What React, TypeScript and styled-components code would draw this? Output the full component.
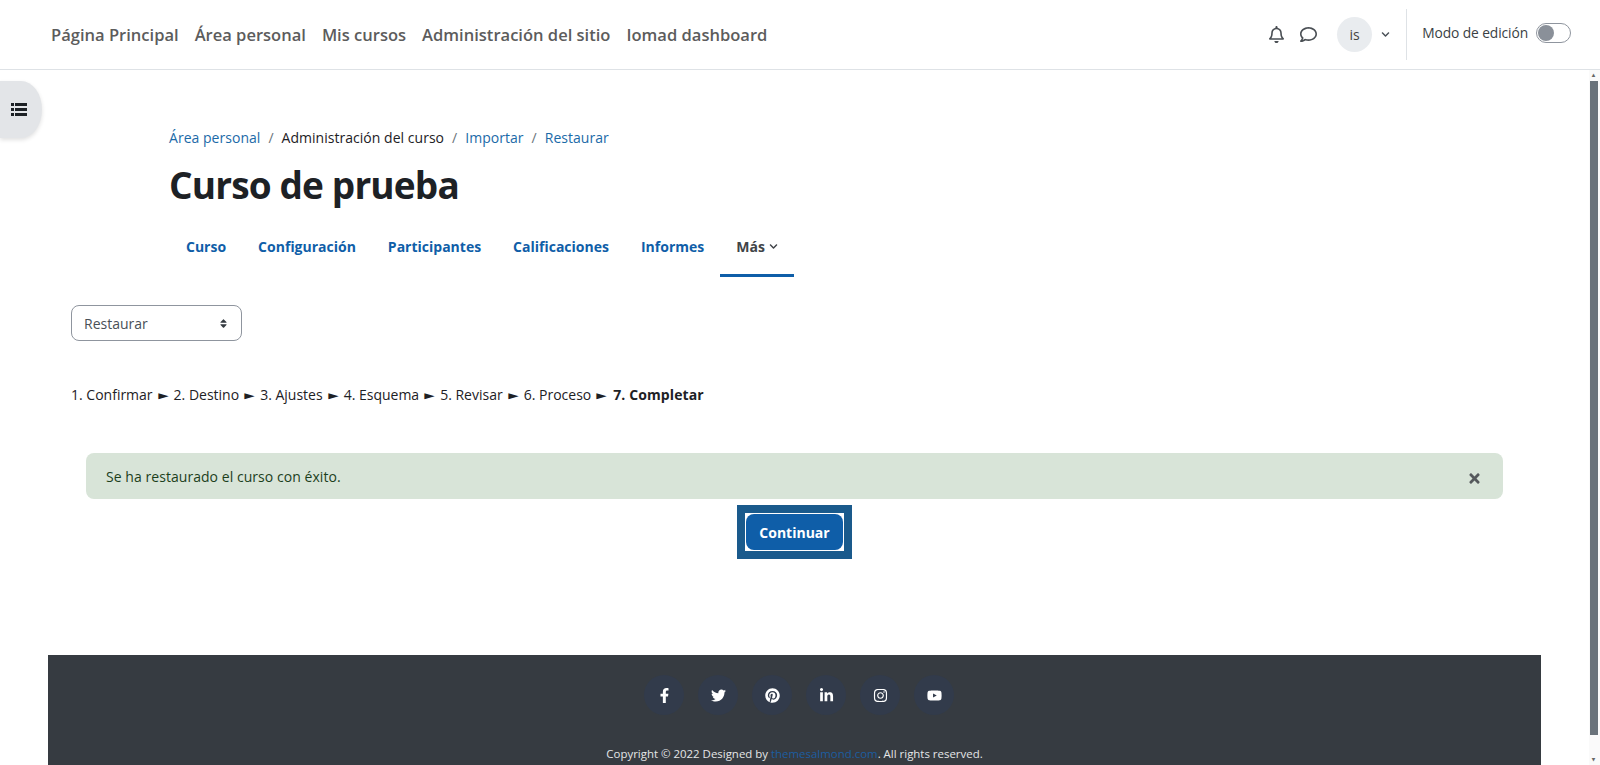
import React from 'react';
import styled, { createGlobalStyle } from 'styled-components';
import {
  FaFacebookF, FaTwitter, FaPinterest, FaLinkedinIn, FaInstagram, FaYoutube,
  FaRegBell, FaRegComment, FaTimes, FaChevronDown, FaSort,
} from 'react-icons/fa';

const Global = createGlobalStyle`
  html, body { margin: 0; padding: 0; height: 765px; overflow: hidden; background: #fff; }
  body { font-family: "Open Sans", "Noto Sans", sans-serif; color: #1d2125; font-size: 14px; }
  * { box-sizing: border-box; }
  a { text-decoration: none; color: inherit; }
`;

const Page = styled.div`
  height: 765px;
  overflow: hidden;
  position: relative;
`;

const Header = styled.header`
  height: 70px;
  border-bottom: 1px solid #dee2e6;
  display: flex;
  align-items: center;
  padding: 0 29px 0 51px;
`;

const MainNav = styled.nav`
  display: flex;
  gap: 16px;
  flex: 1;
`;

const NavLink = styled.a`
  font-size: 16.55px;
  font-weight: 600;
  color: #5c5c5c;
`;

const HeaderActions = styled.div`
  display: flex;
  align-items: center;
  height: 51px;
  margin-top: -1px;
`;

const HeaderIcon = styled.span`
  display: flex;
  color: #4a4f54;
  font-size: 17px;
  margin-right: 15px;
`;

const Avatar = styled.span`
  width: 35px;
  height: 35px;
  margin-left: 5px;
  border-radius: 50%;
  background: #e9ecef;
  color: #444;
  font-size: 14px;
  display: flex;
  align-items: center;
  justify-content: center;
`;

const Caret = styled.span`
  display: flex;
  color: #495057;
  font-size: 9px;
  margin-left: 9px;
`;

const Divider = styled.div`
  width: 1px;
  height: 51px;
  background: #dee2e6;
  margin: 0 15px 0 16px;
`;

const EditLabel = styled.span`
  font-size: 13.8px;
  color: #3a3f44;
  margin-right: 8px;
  margin-top: -3px;
  letter-spacing: -0.1px;
`;

const Toggle = styled.span`
  width: 35px;
  height: 20px;
  margin-top: -3px;
  border: 1px solid #8f959e;
  border-radius: 10px;
  padding: 1px;
  display: flex;
  background: #fff;
`;

const Knob = styled.span`
  width: 16px;
  height: 16px;
  border-radius: 50%;
  background: #8a9099;
`;

const DrawerToggle = styled.div`
  position: absolute;
  left: 0;
  top: 81px;
  width: 42px;
  height: 57px;
  background: #e3e5e8;
  border-radius: 0 50% 50% 0 / 0 50% 50% 0;
  box-shadow: 0 2px 4px rgba(0, 0, 0, 0.12);
  color: #1d2125;
  display: flex;
  align-items: center;
  padding-left: 11px;
`;

const Scrollbar = styled.div`
  position: absolute;
  top: 70px;
  right: 0;
  bottom: 0;
  width: 11px;
  background: #fafafa;
  display: flex;
  flex-direction: column;
  align-items: flex-start;
`;

const ScrollArrow = styled.span<{ $down?: boolean }>`
  height: 11px;
  width: 9px;
  color: #666;
  font-size: 6px;
  line-height: 11px;
  text-align: center;
  transform: ${p => (p.$down ? 'scaleY(-1)' : 'none')};
`;

const ScrollThumb = styled.div`
  flex: 1;
  width: 8px;
  margin: 0 0 19px 1px;
  background: #6a737b;
`;

const Hero = styled.section`
  padding: 58px 0 0 169px;
`;

const Crumbs = styled.div`
  display: flex;
  gap: 8px;
  font-size: 14px;
  line-height: 20px;
  letter-spacing: 0.03px;
  color: #6a737b;
`;

const Crumb = styled.a<{ $plain?: boolean }>`
  color: ${p => (p.$plain ? '#1d2125' : '#1b6aa8')};
`;

const Title = styled.h1`
  margin: 13px 0 0;
  font-size: 37px;
  line-height: 48px;
  font-weight: 700;
  color: #1d2125;
  letter-spacing: -0.85px;
`;

const Tabs = styled.div`
  display: flex;
  margin: 15px 0 0 1px;
`;

const Tab = styled.a<{ $active?: boolean }>`
  display: flex;
  align-items: center;
  gap: 4px;
  height: 53px;
  padding: 0 16px 6px;
  font-size: 14px;
  font-weight: 700;
  color: ${p => (p.$active ? '#404448' : '#0f5ea8')};
  border-bottom: 3px solid ${p => (p.$active ? '#0f5ea8' : 'transparent')};
`;

const TabCaret = styled.span`
  display: flex;
  font-size: 9px;
  margin-top: 1px;
`;

const Body = styled.section`
  padding: 28px 0 0 71px;
`;

const Select = styled.div`
  width: 171px;
  height: 36px;
  border: 1px solid #8f959e;
  border-radius: 8px;
  display: flex;
  align-items: center;
  justify-content: space-between;
  padding: 0 12px;
  font-size: 14px;
  color: #495057;
`;

const SortIcon = styled.span`
  display: flex;
  font-size: 11px;
  color: #343a40;
`;

const Steps = styled.div`
  margin-top: 44px;
  font-size: 14px;
  line-height: 20px;
  color: #1d2125;
`;

const Arrow = styled.span`
  display: inline-block;
  width: 11px;
  margin: 0 5px;
  font-size: 9px;
  line-height: 8px;
  text-align: center;
  vertical-align: 1px;
  transform: scale(1.9, 1.1);
`;

const CurrentStep = styled.strong`
  margin-left: 1px;
  letter-spacing: 0.1px;
`;

const AlertBox = styled.div`
  margin: 48px 0 0 15px;
  width: 1417px;
  height: 46px;
  background: #d8e4d8;
  border-radius: 8px;
  display: flex;
  align-items: center;
  justify-content: space-between;
  padding: 0 21px 0 20px;
  color: #1c3f1c;
  font-size: 14px;
  letter-spacing: 0.05px;
`;

const CloseIcon = styled.span`
  display: flex;
  font-size: 15px;
  color: #55595c;
  margin-top: 5px;
`;

const ButtonRow = styled.div`
  display: flex;
  justify-content: center;
  margin: 6px 0 0 -71px;
  padding-right: 11px;
`;

const ButtonFrame = styled.div`
  width: 115px;
  height: 54px;
  background: #1a5a8c;
  display: flex;
  align-items: center;
  justify-content: center;
`;

const ButtonRing = styled.div`
  background: #fff;
  width: 99px;
  height: 38px;
  padding: 1px;
`;

const Button = styled.button`
  width: 100%;
  height: 100%;
  border: 0;
  padding: 0;
  border-radius: 8px;
  background: #0f5ea8;
  color: #fff;
  font-family: inherit;
  font-size: 14px;
  font-weight: 700;
`;

const Footer = styled.footer`
  margin: 96px 0 0 48px;
  width: 1493px;
  height: 200px;
  background: #363b41;
  padding-top: 20px;
  display: flex;
  flex-direction: column;
  align-items: center;
`;

const Socials = styled.div`
  display: flex;
  gap: 14px;
  margin-left: 9px;
`;

const Social = styled.a`
  width: 40px;
  height: 40px;
  border-radius: 50%;
  background: #323b4b;
  color: #fff;
  font-size: 15px;
  display: flex;
  align-items: center;
  justify-content: center;
`;

const Copyright = styled.p`
  margin: 30px 0 0;
  font-size: 11.45px;
  line-height: 18px;
  color: #e4e6e8;
`;

const FooterLink = styled.a`
  color: #1c5da0;
`;

const navItems = ['Página Principal', 'Área personal', 'Mis cursos', 'Administración del sitio', 'Iomad dashboard'];
const tabs = ['Curso', 'Configuración', 'Participantes', 'Calificaciones', 'Informes'];
const steps = ['1. Confirmar', '2. Destino', '3. Ajustes', '4. Esquema', '5. Revisar', '6. Proceso'];
const socials = [FaFacebookF, FaTwitter, FaPinterest, FaLinkedinIn, FaInstagram, FaYoutube];

const ListIcon = () => (
  <svg width="16" height="13" viewBox="0 0 16 13" fill="currentColor">
    <rect x="0" y="0" width="3" height="3" />
    <rect x="4" y="0" width="12" height="3" />
    <rect x="0" y="5" width="3" height="3" />
    <rect x="4" y="5" width="12" height="3" />
    <rect x="0" y="10" width="3" height="3" />
    <rect x="4" y="10" width="12" height="3" />
  </svg>
);

export default function App() {
  return (
    <Page>
      <Global />
      <Header>
        <MainNav>
          {navItems.map(n => <NavLink key={n} href="#">{n}</NavLink>)}
        </MainNav>
        <HeaderActions>
          <HeaderIcon><FaRegBell /></HeaderIcon>
          <HeaderIcon><FaRegComment /></HeaderIcon>
          <Avatar>is</Avatar>
          <Caret><FaChevronDown /></Caret>
          <Divider />
          <EditLabel>Modo de edición</EditLabel>
          <Toggle><Knob /></Toggle>
        </HeaderActions>
      </Header>
      <DrawerToggle><ListIcon /></DrawerToggle>
      <Scrollbar>
        <ScrollArrow>▲</ScrollArrow>
        <ScrollThumb />
        <ScrollArrow $down>▲</ScrollArrow>
      </Scrollbar>
      <Hero>
        <Crumbs>
          <Crumb href="#">Área personal</Crumb><span>/</span>
          <Crumb $plain>Administración del curso</Crumb><span>/</span>
          <Crumb href="#">Importar</Crumb><span>/</span>
          <Crumb href="#">Restaurar</Crumb>
        </Crumbs>
        <Title>Curso de prueba</Title>
        <Tabs>
          {tabs.map(t => <Tab key={t} href="#">{t}</Tab>)}
          <Tab $active href="#">Más <TabCaret><FaChevronDown /></TabCaret></Tab>
        </Tabs>
      </Hero>
      <Body>
        <Select>Restaurar<SortIcon><FaSort /></SortIcon></Select>
        <Steps>
          {steps.map(s => <React.Fragment key={s}>{s}<Arrow>►</Arrow></React.Fragment>)}
          <CurrentStep>7. Completar</CurrentStep>
        </Steps>
        <AlertBox>
          Se ha restaurado el curso con éxito.
          <CloseIcon><FaTimes /></CloseIcon>
        </AlertBox>
        <ButtonRow>
          <ButtonFrame>
            <ButtonRing><Button>Continuar</Button></ButtonRing>
          </ButtonFrame>
        </ButtonRow>
      </Body>
      <Footer>
        <Socials>
          {socials.map((Icon, i) => <Social key={i} href="#"><Icon /></Social>)}
        </Socials>
        <Copyright>Copyright © 2022 Designed by <FooterLink href="#">themesalmond.com</FooterLink>. All rights reserved.</Copyright>
      </Footer>
    </Page>
  );
}
